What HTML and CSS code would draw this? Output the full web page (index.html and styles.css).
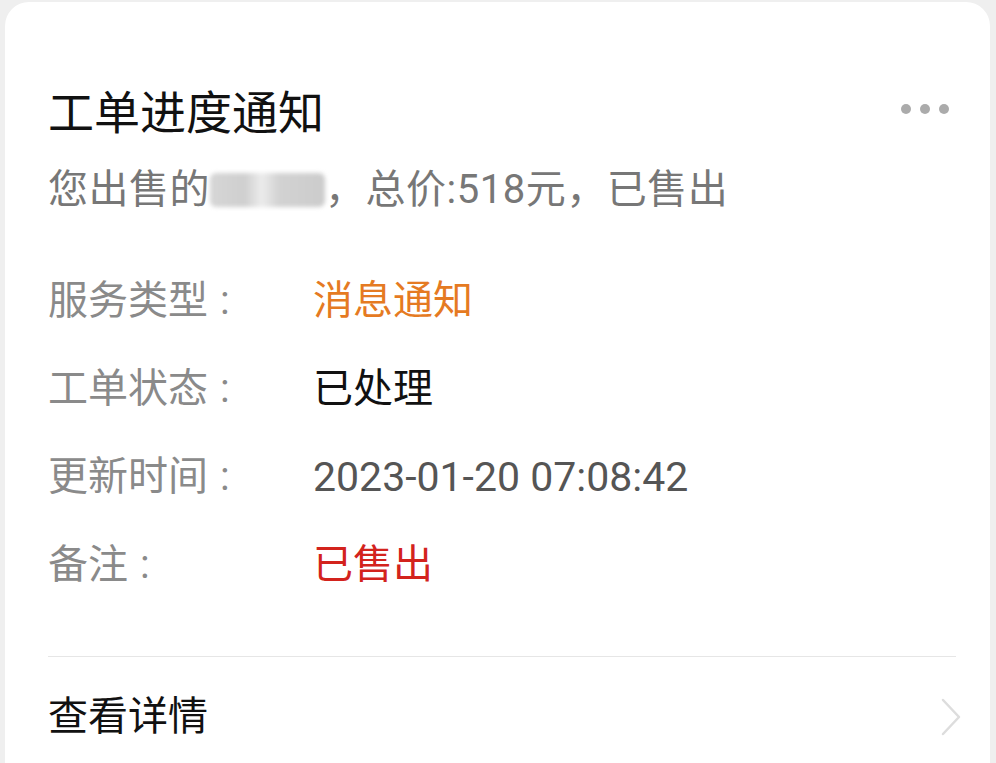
FILE: index.html
```html
<!DOCTYPE html>
<html lang="zh-CN">
<head>
  <meta charset="UTF-8">
  <meta name="viewport" content="width=device-width, initial-scale=1.0">
  <title>工单进度通知</title>
  <link rel="stylesheet" href="styles.css">
</head>
<body>

  <div class="notice-card">
    <!-- Kopfzeile -->
    <div class="notice-head">
      <h1>工单进度通知</h1>
      <span class="more-dots"><i></i><i></i><i></i></span>
    </div>
    <p class="notice-desc">您出售的<span class="masked"></span>，总价:518元，已售出</p>

    <dl class="notice-info">
      <dt>服务类型<span class="colon">:</span></dt><dd class="orange">消息通知</dd>
      <dt>工单状态<span class="colon">:</span></dt><dd class="dark">已处理</dd>
      <dt>更新时间<span class="colon">:</span></dt><dd class="grey">2023-01-20 07:08:42</dd>
      <dt>备注<span class="colon">:</span></dt><dd class="red">已售出</dd>
    </dl>

    <a class="notice-foot" href="#">
      <span>查看详情</span>
      <svg class="chevron" width="22" height="38" viewBox="0 0 22 38">
        <polyline points="3,2 19,19 3,36" fill="none" stroke="#dddddd" stroke-width="2.5" stroke-linecap="round" stroke-linejoin="round"/>
      </svg>
    </a>
  </div>

</body>
</html>
```

FILE: styles.css
```css
:root {
  --bg: #efefef;
  --text: #111;
  --muted: #777;
  --label: #8a8a8a;
  --orange: #e57a22;
  --red: #d3231d;
  --line: #e6e6e6;
}
*, *::before, *::after { box-sizing: border-box; margin: 0; padding: 0; }
body {
  background: var(--bg);
  font-family: Roboto, "Noto Sans CJK SC", sans-serif;
  color: var(--text);
  height: 763px;
  overflow: hidden;
}

/* Karte läuft unten aus dem Bild, daher unten keine Rundung */
.notice-card {
  margin: 2px 6px 0 5px;
  background: #fff;
  border-radius: 24px 24px 0 0;
  padding: 81px 34px 0 43px;
  height: 761px;
}

.notice-head {
  display: flex;
  align-items: center;
  justify-content: space-between;
  height: 60px;
}
.notice-head h1 {
  font-size: 46px;
  font-weight: 400;
  line-height: 60px;
}
.more-dots { display: flex; gap: 9px; margin: 0 7px 8px 0; }
.more-dots i {
  width: 10px; height: 10px;
  border-radius: 50%;
  background: #ababab;
}

.notice-desc {
  margin-top: 17px;
  font-size: 40px;
  line-height: 60px;
  letter-spacing: 0.5px;
  color: var(--muted);
}
.masked {
  display: inline-block;
  width: 115px; height: 34px;
  vertical-align: -4px;
  background: linear-gradient(90deg, #d6d6d6 0%, #cfcfcf 30%, #ececec 45%, #d2d2d2 60%, #cccccc 100%);
  filter: blur(2px);
  border-radius: 6px;
}

.notice-info {
  margin-top: 37px;
  display: grid;
  grid-template-columns: 265px 1fr;
  font-size: 40px;
  line-height: 88px;
}
.notice-info dt { color: var(--label); }
.notice-info dd { margin: 0; }
.colon { margin-left: 12px; }
.orange { color: var(--orange); }
.dark { color: var(--text); }
.grey { color: #555; font-size: 41px; }
.red { color: var(--red); }

.notice-foot {
  margin-top: 47px;
  border-top: 1px solid var(--line);
  display: flex;
  align-items: center;
  justify-content: space-between;
  padding-top: 16px;
  line-height: 88px;
  font-size: 40px;
  color: var(--text);
  text-decoration: none;
}
.chevron { margin-right: -6px; }
```
